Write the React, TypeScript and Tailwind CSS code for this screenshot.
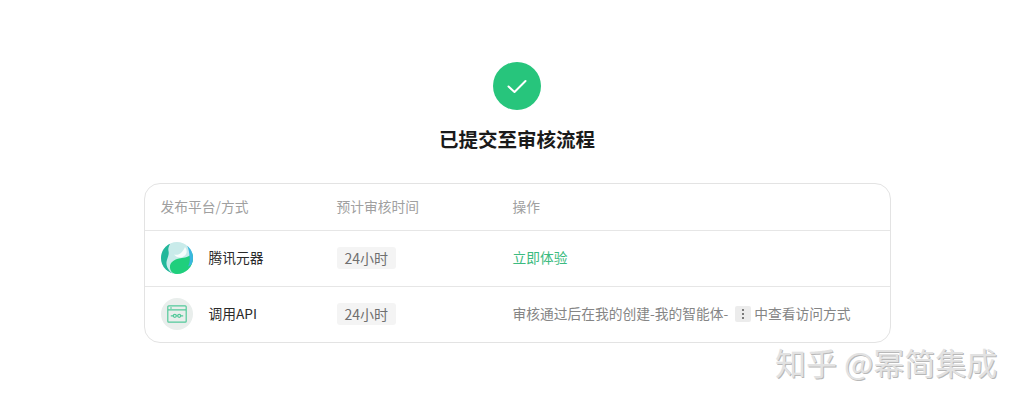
import React from "react";

const font = { fontFamily: '"Noto Sans CJK SC", "Liberation Sans", sans-serif' };

function YuanbaoIcon() {
  return (
    <svg width="32" height="32" viewBox="0 0 32 32" className="shrink-0">
      <defs>
        <clipPath id="ybc">
          <circle cx="16" cy="16" r="16" />
        </clipPath>
      </defs>
      <g clipPath="url(#ybc)">
        <rect width="32" height="32" fill="#c9ebea" />
        <path d="M0 8 L0 32 L12 32 C8 29 5 25 5.500 20 C6 16 8.500 13 7.500 9 C7 7 7.500 5 9 2 L6 0 Z" fill="#22b79a" />
        <path d="M32 11 C27 16 22 15.500 18 16.500 C12 18 8.500 21 9 26 C9.300 29 11 31 14 32 L32 32 Z" fill="#1fcf7c" />
        <path d="M26 3 L32 8 L32 20 C31 22 29.500 23.500 27 24.500 C29 21 29 17 28.500 14 C28.200 10 27.500 6.500 26 3 Z" fill="#3ab6e0" />
        <path d="M13 12.500 C18 14 22 10 24 5 C27 9 26 13.500 21 15.200 C18 16 15 15 13 12.500 Z" fill="#f7fdfc" />
      </g>
    </svg>
  );
}

function ApiIcon() {
  return (
    <div className="flex h-8 w-8 shrink-0 items-center justify-center rounded-full bg-[#e9eeec]">
      <svg width="20" height="20" viewBox="0 0 20 20" fill="none" stroke="#52c99a" strokeWidth="1.200">
        <rect x="0.800" y="1.800" width="18.400" height="16.400" rx="1" />
        <path d="M1 5.800 H19" />
        <path d="M3 4 H5" />
        <circle cx="7.800" cy="11.800" r="1.500" />
        <circle cx="12.200" cy="11.800" r="1.500" />
        <path d="M3.800 11.800 H6.300 M9.300 11.800 H10.700 M13.700 11.800 H16.200" />
      </svg>
    </div>
  );
}

function TimeTag() {
  return (
    <span className="block w-fit rounded-[3px] bg-[#f4f4f4] px-2 py-[1px] text-[14px] leading-[20px] text-[#6f6f6f]">
      24小时
    </span>
  );
}

function Row({ icon, name, children }: { icon: React.ReactNode; name: string; children: React.ReactNode }) {
  return (
    <div className="grid h-[56px] grid-cols-[176px_176px_1fr] items-center border-t border-[#e6e6e6] pb-[2px] pl-4">
      <div className="flex items-center gap-4 text-[13.750px] leading-[20px] text-[#2a2a2a]">
        {icon}
        <span className="pb-[2px]">{name}</span>
      </div>
      <TimeTag />
      {children}
    </div>
  );
}

export default function App() {
  return (
    <div className="relative flex h-[407px] w-[1024px] flex-col items-center overflow-hidden bg-white pl-[10px] pt-[62px]" style={font}>
      <div className="flex h-12 w-12 items-center justify-center rounded-full bg-[#27c57c]">
        <svg width="24" height="24" viewBox="0 0 24 24" fill="none" stroke="#ffffff" strokeWidth="2" strokeLinecap="round" strokeLinejoin="round">
          <path d="M3.500 12.500 L9.500 18 L20.500 7" />
        </svg>
      </div>
      <h1 className="mt-[14px] text-[19.500px] font-bold leading-[30px] text-[#1a1a1a]">已提交至审核流程</h1>

      <div className="mt-[29px] w-[747px] overflow-hidden rounded-[16px] border border-[#e3e3e3] bg-white">
        <div className="grid h-[46px] grid-cols-[176px_176px_1fr] items-center pb-[2px] pl-4 text-[13.750px] leading-[20px] text-[#a0a0a0]">
          <span>发布平台/方式</span>
          <span>预计审核时间</span>
          <span>操作</span>
        </div>
        <Row icon={<YuanbaoIcon />} name="腾讯元器">
          <span className="pb-[2px] text-[13.750px] leading-[20px] text-[#3cbb80]">立即体验</span>
        </Row>
        <Row icon={<ApiIcon />} name="调用API">
          <div className="flex items-center text-[13.750px] leading-[20px] text-[#858585]">
            <span className="pb-[2px]">审核通过后在我的创建-我的智能体-</span>
            <span className="ml-[7px] mr-[3px] flex h-[16px] w-[16px] flex-col items-center justify-center gap-[2px] rounded-[2px] bg-[#ececec]">
              <i className="h-[2px] w-[2px] rounded-full bg-[#555555]" />
              <i className="h-[2px] w-[2px] rounded-full bg-[#555555]" />
              <i className="h-[2px] w-[2px] rounded-full bg-[#555555]" />
            </span>
            <span className="pb-[2px]">中查看访问方式</span>
          </div>
        </Row>
      </div>

      <div className="absolute left-[775px] top-[340px] whitespace-pre text-[31px] leading-[44px] text-[#e2e2e2] [text-shadow:1px_1px_0_#b8b8b8]">
        知乎 @幂简集成
      </div>
    </div>
  );
}
